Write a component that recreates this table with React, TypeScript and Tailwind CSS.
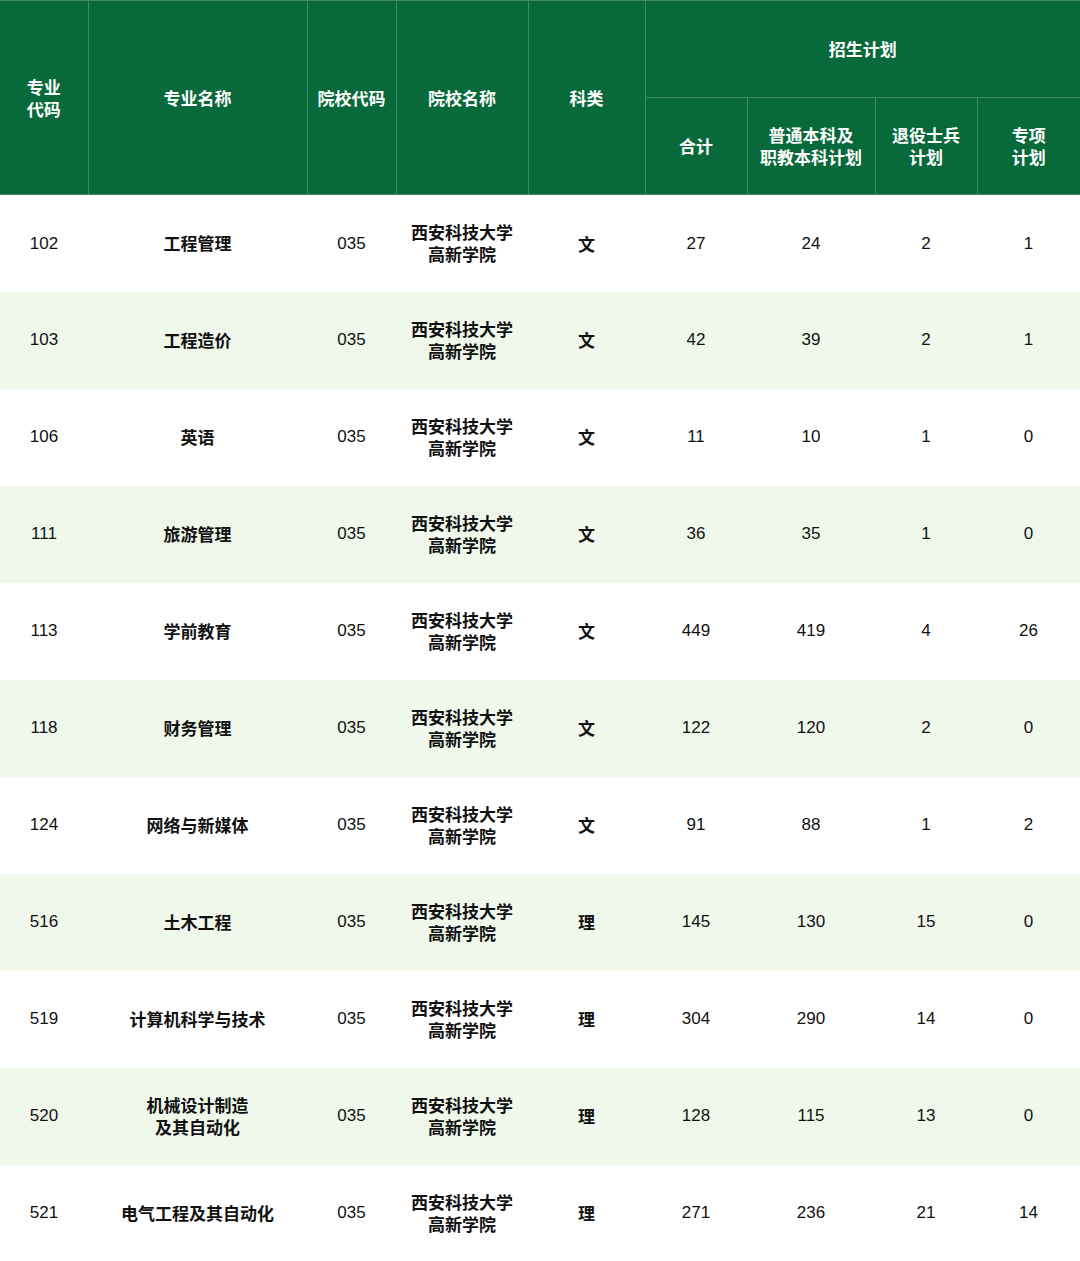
import React from 'react'

const rows = [
  ['102', '工程管理', '文', '27', '24', '2', '1'],
  ['103', '工程造价', '文', '42', '39', '2', '1'],
  ['106', '英语', '文', '11', '10', '1', '0'],
  ['111', '旅游管理', '文', '36', '35', '1', '0'],
  ['113', '学前教育', '文', '449', '419', '4', '26'],
  ['118', '财务管理', '文', '122', '120', '2', '0'],
  ['124', '网络与新媒体', '文', '91', '88', '1', '2'],
  ['516', '土木工程', '理', '145', '130', '15', '0'],
  ['519', '计算机科学与技术', '理', '304', '290', '14', '0'],
  ['520', '机械设计制造\n及其自动化', '理', '128', '115', '13', '0'],
  ['521', '电气工程及其自动化', '理', '271', '236', '21', '14'],
]

const widths = [88, 219, 89, 132, 117, 102, 128, 102, 103]

const th = 'border border-[#3f8c63] font-bold text-white text-center align-middle leading-[22px]'
const cjk = "font-['Noto_Sans_CJK_SC','Liberation_Sans',sans-serif]"

export default function App() {
  return (
    <div className={`w-[1080px] bg-white text-[17px] ${cjk}`}>
      <table className="w-[1080px] table-fixed border-collapse">
        <colgroup>
          {widths.map((w, i) => (
            <col key={i} style={{ width: w }} />
          ))}
        </colgroup>
        <thead className="bg-[#08693a]">
          <tr className="h-[97px]">
            <th rowSpan={2} className={`${th} border-l-0`}>
              专业
              <br />
              代码
            </th>
            <th rowSpan={2} className={th}>专业名称</th>
            <th rowSpan={2} className={th}>院校代码</th>
            <th rowSpan={2} className={th}>院校名称</th>
            <th rowSpan={2} className={th}>科类</th>
            <th colSpan={4} className={`${th} border-r-0`}>招生计划</th>
          </tr>
          <tr className="h-[97px]">
            <th className={th}>合计</th>
            <th className={th}>
              普通本科及
              <br />
              职教本科计划
            </th>
            <th className={th}>
              退役士兵
              <br />
              计划
            </th>
            <th className={`${th} border-r-0`}>
              专项
              <br />
              计划
            </th>
          </tr>
        </thead>
        <tbody className="border-b border-[#eaf5e4]">
          {rows.map((r, i) => (
            <tr key={r[0]} className={`h-[97px] ${i % 2 === 1 ? 'bg-[#f0f8ec]' : 'bg-white'} text-[#111]`}>
              <td className="text-center align-middle font-['Liberation_Sans',sans-serif]">{r[0]}</td>
              <td className="text-center align-middle font-bold leading-[22px] whitespace-pre-line">{r[1]}</td>
              <td className="text-center align-middle font-['Liberation_Sans',sans-serif]">035</td>
              <td className="text-center align-middle font-bold leading-[22px]">
                西安科技大学
                <br />
                高新学院
              </td>
              <td className="text-center align-middle font-bold">{r[2]}</td>
              <td className="text-center align-middle font-['Liberation_Sans',sans-serif]">{r[3]}</td>
              <td className="text-center align-middle font-['Liberation_Sans',sans-serif]">{r[4]}</td>
              <td className="text-center align-middle font-['Liberation_Sans',sans-serif]">{r[5]}</td>
              <td className="text-center align-middle font-['Liberation_Sans',sans-serif]">{r[6]}</td>
            </tr>
          ))}
        </tbody>
      </table>
    </div>
  )
}
